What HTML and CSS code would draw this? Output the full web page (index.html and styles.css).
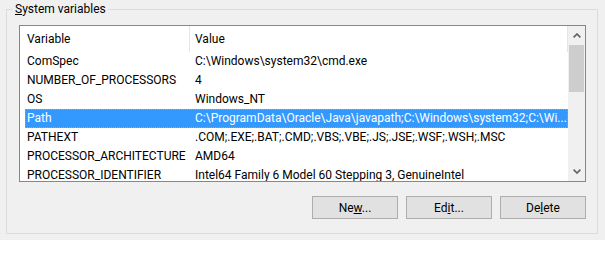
FILE: index.html
```html
<!DOCTYPE html>
<html lang="en">
<head>
    <meta charset="UTF-8">
    <title>System variables</title>
    <link rel="stylesheet" href="styles.css">
</head>
<body>
    <div class="dialog">
        <fieldset class="group">
            <legend><u>S</u>ystem variables</legend>

            <!-- list view -->
            <div class="listview">
                <div class="list-main">
                    <div class="list-header">
                        <div class="hcol hcol-name">Variable</div>
                        <div class="hcol hcol-value">Value</div>
                    </div>
                    <div class="list-rows">
                        <div class="row"><span class="col-name">ComSpec</span><span class="col-value">C:\Windows\system32\cmd.exe</span></div>
                        <div class="row"><span class="col-name">NUMBER_OF_PROCESSORS</span><span class="col-value">4</span></div>
                        <div class="row"><span class="col-name">OS</span><span class="col-value">Windows_NT</span></div>
                        <div class="row selected"><span class="col-name">Path</span><span class="col-value">C:\ProgramData\Oracle\Java\javapath;C:\Windows\system32;C:\Wi...</span></div>
                        <div class="row"><span class="col-name">PATHEXT</span><span class="col-value">.COM;.EXE;.BAT;.CMD;.VBS;.VBE;.JS;.JSE;.WSF;.WSH;.MSC</span></div>
                        <div class="row"><span class="col-name">PROCESSOR_ARCHITECTURE</span><span class="col-value">AMD64</span></div>
                        <div class="row"><span class="col-name">PROCESSOR_IDENTIFIER</span><span class="col-value">Intel64 Family 6 Model 60 Stepping 3, GenuineIntel</span></div>
                    </div>
                </div>
                <div class="scrollbar">
                    <div class="scroll-btn">
                        <svg width="8" height="5" viewBox="0 0 8 5"><path d="M0.6 4.4 L4 1 L7.4 4.4" fill="none" stroke="#606060" stroke-width="1.6"/></svg>
                    </div>
                    <div class="scroll-track">
                        <div class="scroll-thumb"></div>
                    </div>
                    <div class="scroll-btn">
                        <svg width="8" height="5" viewBox="0 0 8 5"><path d="M0.6 0.6 L4 4 L7.4 0.6" fill="none" stroke="#606060" stroke-width="1.6"/></svg>
                    </div>
                </div>
            </div>

            <div class="buttons">
                <button class="btn">Ne<u>w</u>...</button>
                <button class="btn">Ed<u>i</u>t...</button>
                <button class="btn">De<u>l</u>ete</button>
            </div>
        </fieldset>
    </div>
</body>
</html>
```

FILE: styles.css
```css
* {
    margin: 0;
    padding: 0;
    box-sizing: border-box;
}

body {
    background: #ffffff;
    font-family: Roboto, 'Liberation Sans', Arial, sans-serif;
    font-size: 12px;
    color: #000000;
}

.dialog {
    background: #f0f0f0;
    height: 240px;
    padding: 1px 7px 0 6px;
}

.group {
    width: 592px;
    min-width: 0;
    border: 1px solid #dcdcdc;
    padding: 8px 11px 14px 12px;
}

.group legend {
    font-size: 12px;
    line-height: 16px;
    padding: 0 2px;
    margin-left: -6px;
}

/* list view */
.listview {
    display: flex;
    height: 157px;
    border: 1px solid #828790;
    background: #ffffff;
}

.list-main {
    flex: 1;
    min-width: 0;
    overflow: hidden;
}

.list-header {
    display: flex;
    height: 26px;
}

.hcol {
    line-height: 26px;
    border-right: 1px solid #e5e5e5;
    white-space: nowrap;
}

.hcol-name {
    width: 170px;
    padding-left: 7px;
}

.hcol-value {
    flex: 1;
    padding-left: 5px;
}

.row {
    display: flex;
    height: 19px;
    line-height: 19px;
    margin-left: 5px;
    white-space: nowrap;
}

.row.selected {
    background: #3399ff;
    color: #ffffff;
    outline: 1px dotted #d9965a;
    outline-offset: -1px;
}

.col-name {
    width: 165px;
    padding-left: 2px;
    overflow: hidden;
}

.col-value {
    flex: 1;
    min-width: 0;
    padding-left: 5px;
    overflow: hidden;
}

/* scroll bar */
.scrollbar {
    width: 17px;
    background: #f0f0f0;
    display: flex;
    flex-direction: column;
}

.scroll-btn {
    height: 19px;
    display: flex;
    align-items: center;
    justify-content: center;
}

.scroll-track {
    flex: 1;
}

.scroll-thumb {
    height: 47px;
    margin: 0 1px;
    background: #cdcdcd;
}

/* buttons */
.buttons {
    display: flex;
    justify-content: flex-end;
    gap: 8px;
    margin-top: 14px;
}

.btn {
    width: 86px;
    height: 23px;
    background: #e1e1e1;
    border: 1px solid #adadad;
    font-family: Roboto, 'Liberation Sans', Arial, sans-serif;
    font-size: 12px;
    color: #000000;
}
```
